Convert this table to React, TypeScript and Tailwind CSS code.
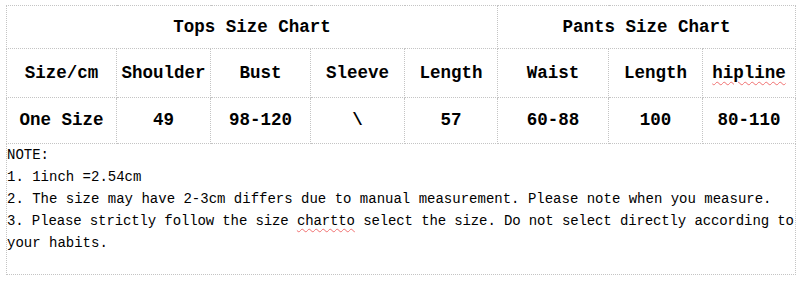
const cell = "border border-dotted border-[#c4c4c4] text-center align-middle p-0";

const widths = [110, 94, 100, 94, 93, 111, 94, 93];

export default function App() {
  return (
    <div className="w-[800px] h-[287px] bg-white text-black font-['Liberation_Mono',monospace]">
      <div className="pt-[5px] pl-[6px]">
        <table className="border-collapse table-fixed w-[790px] font-bold text-[17.5px]">
          <colgroup>
            {widths.map((w, i) => (
              <col key={i} style={{ width: w }} />
            ))}
          </colgroup>
          <tbody>
            <tr className="h-[43px]">
              <td colSpan={5} className={cell}>Tops Size Chart</td>
              <td colSpan={3} className={cell}>Pants Size Chart</td>
            </tr>
            <tr className="h-[49px]">
              <td className={cell}>Size/cm</td>
              <td className={cell}>Shoulder</td>
              <td className={cell}>Bust</td>
              <td className={cell}>Sleeve</td>
              <td className={cell}>Length</td>
              <td className={cell}>Waist</td>
              <td className={cell}>Length</td>
              <td className={cell}>
                <span className="underline decoration-wavy decoration-[#f07070] decoration-1 underline-offset-[3px]">
                  hipline
                </span>
              </td>
            </tr>
            <tr className="h-[46px]">
              <td className={cell}>One Size</td>
              <td className={cell}>49</td>
              <td className={cell}>98-120</td>
              <td className={cell}>\</td>
              <td className={cell}>57</td>
              <td className={cell}>60-88</td>
              <td className={cell}>100</td>
              <td className={cell}>80-110</td>
            </tr>
          </tbody>
        </table>
        <div className="w-[790px] h-[131px] border-x border-b border-dotted border-[#c4c4c4] text-[14px] leading-[22px] whitespace-pre">
          <p>NOTE:</p>
          <p>1. 1inch =2.54cm</p>
          <p>2. The size may have 2-3cm differs due to manual measurement. Please note when you measure.</p>
          <p className="tracking-[-0.12px]">
            3. Please strictly follow the size{" "}
            <span className="underline decoration-wavy decoration-[#f07070] decoration-1 underline-offset-[3px]">chartto</span>{" "}
            select the size. Do not select directly according to
          </p>
          <p>your habits.</p>
        </div>
      </div>
    </div>
  );
}
